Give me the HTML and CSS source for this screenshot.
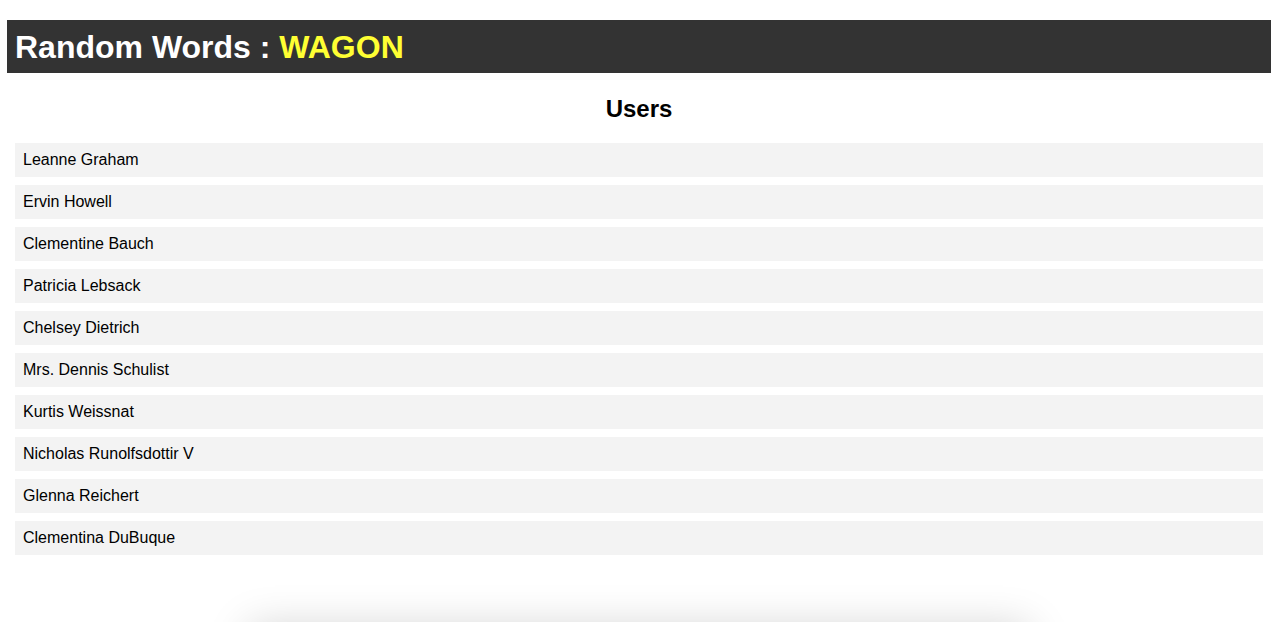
FILE: index.html
```html
<!DOCTYPE html>
<html>
<head>
<meta charset="utf-8">
<link rel="stylesheet" href="styles.css">
</head>
<body>
<header class="topbar">
  <h1 class="title">Random Words : <span class="word">WAGON</span></h1>
</header>
<main class="content">
  <h2 class="section-title">Users</h2>
  <ul class="users">
    <li class="user">Leanne Graham</li>
    <li class="user">Ervin Howell</li>
    <li class="user">Clementine Bauch</li>
    <li class="user">Patricia Lebsack</li>
    <li class="user">Chelsey Dietrich</li>
    <li class="user">Mrs. Dennis Schulist</li>
    <li class="user">Kurtis Weissnat</li>
    <li class="user">Nicholas Runolfsdottir V</li>
    <li class="user">Glenna Reichert</li>
    <li class="user">Clementina DuBuque</li>
  </ul>
  <div class="card"></div>
</main>
</body>
</html>
```
FILE: styles.css
```css
html, body {
  margin: 0;
  padding: 0;
  background: #fff;
}
body {
  font-family: "Liberation Sans", Arial, sans-serif;
  color: #000;
  padding: 20px 8px 0 7px;
}
.topbar {
  background: #333333;
  height: 53px;
  display: flex;
  align-items: center;
  padding: 0 8px;
}
.title {
  margin: 0;
  font-size: 32px;
  font-weight: bold;
  color: #fff;
  line-height: 1;
}
.word {
  color: #ffff33;
}
.content {
  padding: 0 8px;
}
.section-title {
  margin: 22px 0 0;
  text-align: center;
  font-size: 24px;
  line-height: 28px;
  font-weight: bold;
}
.users {
  list-style: none;
  margin: 20px 0 0;
  padding: 0;
  display: flex;
  flex-direction: column;
  gap: 8px;
}
.user {
  background: #f3f3f3;
  height: 34px;
  line-height: 34px;
  padding: 0 8px;
  font-size: 16px;
}
.card {
  width: 780px;
  height: 200px;
  margin: 72px auto 0;
  background: #fff;
  box-shadow: 0 0 40px rgba(0, 0, 0, 0.18);
}
```
